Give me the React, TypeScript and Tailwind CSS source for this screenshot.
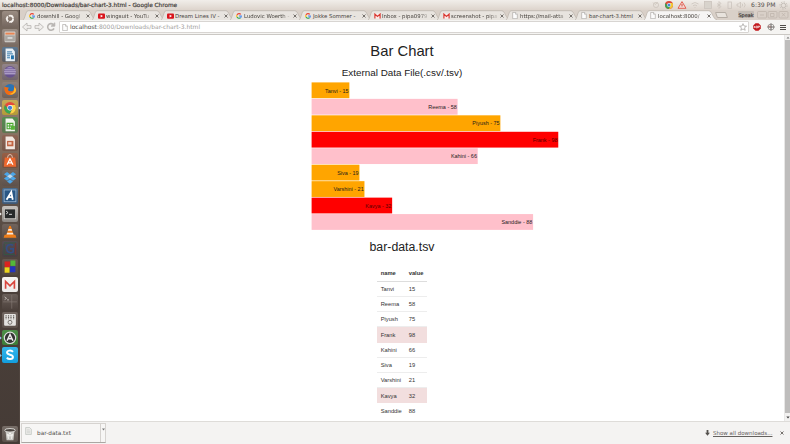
import React from "react";

type Row = { name: string; value: number };

const rows: Row[] = [
  { name: "Tanvi", value: 15 },
  { name: "Reema", value: 58 },
  { name: "Piyush", value: 75 },
  { name: "Frank", value: 98 },
  { name: "Kahini", value: 66 },
  { name: "Siva", value: 19 },
  { name: "Varshini", value: 21 },
  { name: "Kavya", value: 32 },
  { name: "Sanddie", value: 88 },
];

const barColors = ["#ffa500", "#ffc0cb", "#ffa500", "#ff0000", "#ffc0cb", "#ffa500", "#ffa500", "#ff0000", "#ffc0cb"];

const GoogleIcon = () => (
  <svg viewBox="0 0 12 12" className="h-[6px] w-[6px] shrink-0" fill="none" strokeWidth="2.2">
    <path d="M9.6 2.8A4.6 4.6 0 0 0 2 3.8" stroke="#ea4335" />
    <path d="M2 3.8A4.6 4.6 0 0 0 2 8.2" stroke="#fbbc05" />
    <path d="M2 8.2A4.6 4.6 0 0 0 9 9.5" stroke="#34a853" />
    <path d="M9 9.5A4.6 4.6 0 0 0 10.6 6H6" stroke="#4285f4" />
  </svg>
);

const YoutubeIcon = () => (
  <svg viewBox="0 0 14 12" className="h-[6px] w-[7px] shrink-0">
    <rect x="0" y="1" width="14" height="10.5" rx="2" fill="#d9141c" />
    <path d="M5.3 3.5v5.4L10 6.2z" fill="#fff" />
  </svg>
);

const GmailIcon = () => (
  <svg viewBox="0 0 14 12" className="h-[6px] w-[7px] shrink-0">
    <rect x="1" y="1" width="12" height="10" fill="#fbeeee" />
    <path d="M1.8 11V2.2L7 7l5.2-4.8V11" fill="none" stroke="#d93a32" strokeWidth="2.4" />
  </svg>
);

const PageIcon = () => (
  <svg viewBox="0 0 10 12" className="h-[7px] w-[6px] shrink-0" fill="#fcfcfc" stroke="#a8a5a1" strokeWidth="1.1">
    <path d="M1 .8h5L9 3.8v7.6H1z" />
    <path d="M6 .8v3h3" />
  </svg>
);

const CloseIcon = () => (
  <svg viewBox="0 0 8 8" className="h-[4px] w-[4px] shrink-0" stroke="#68635f" strokeWidth="1.8">
    <path d="M1 1l6 6M7 1L1 7" />
  </svg>
);

type TabInfo = { icon: React.ReactNode; label: string; faded: boolean };

const tabs: TabInfo[] = [
  { icon: <GoogleIcon />, label: "downhill - Googl", faded: true },
  { icon: <YoutubeIcon />, label: "wingsuit - YouTu", faded: true },
  { icon: <YoutubeIcon />, label: "Dream Lines IV -", faded: false },
  { icon: <GoogleIcon />, label: "Ludovic Woerth -", faded: true },
  { icon: <GoogleIcon />, label: "Jokke Sommer -", faded: false },
  { icon: <GmailIcon />, label: "Inbox - pipa0979", faded: true },
  { icon: <GmailIcon />, label: "screenshot - pipa", faded: true },
  { icon: <PageIcon />, label: "https://mail-atta", faded: true },
  { icon: <PageIcon />, label: "bar-chart-3.html", faded: false },
  { icon: <PageIcon />, label: "localhost:8000/", faded: true },
];

function Tab({ tab, active }: { tab: TabInfo; active: boolean }) {
  return (
    <div className="relative h-[10px] w-[69px] shrink-0">
      <svg viewBox="0 0 73 10" className="absolute top-0 left-0 h-[10px] w-[73px]">
        <path d="M0 10C2 9 2.6 1 5 .7H65C68 1 69 9 73 10" fill={active ? "#f6f5f4" : "#e8e4df"} stroke="#b9b1a9" strokeWidth=".7" />
      </svg>
      <div className="relative flex h-full items-center pt-[1px] pl-[6px]">
        <span className="flex w-[7px] shrink-0">{tab.icon}</span>
        <span
          className={
            tab.faded
              ? "ml-[1px] w-[48px] shrink-0 whitespace-nowrap text-[5.4px] leading-[8px] text-[#45413c] [mask-image:linear-gradient(to_right,#000_78%,transparent)]"
              : "ml-[1px] w-[48px] shrink-0 whitespace-nowrap text-[5.4px] leading-[8px] text-[#45413c]"
          }
        >
          {tab.label}
        </span>
        <span className="ml-[1px] flex">
          <CloseIcon />
        </span>
      </div>
    </div>
  );
}

type Launcher = { from: string; to: string; art: React.ReactNode };

const launchers: Launcher[] = [
  { from: "#9a8c82", to: "#75675f", art: <g fill="none" stroke="#f5f1ed"><circle cx="8" cy="8" r="3.2" strokeWidth="1.8" strokeDasharray="5.7 1" /><circle cx="4.5" cy="8" r=".5" /><circle cx="9.7" cy="5" r=".5" /><circle cx="9.7" cy="11" r=".5" /></g> },
  { from: "#9b8e85", to: "#7a6d65", art: <g><rect x="2.5" y="2.6" width="11" height="11" rx="1" fill="#d5d2cd" /><path d="M3.3 3.7h9.4v2H3.3z" fill="#e98553" /><path d="M3 6.5h10v6H3z" fill="#aaa6a1" /><path d="M5.5 8.5h5v1.3h-5z" fill="#eee" /></g> },
  { from: "#5b7892", to: "#5b5b60", art: <g><path d="M3.5 1.5h7l2.5 3v10H3.5z" fill="#e8f0f6" /><path d="M5 5h5M5 7h6M5 9h3M5 11h3" stroke="#3176a8" /><path d="M9 8.5h3v4H9z" fill="#2273ad" /></g> },
  { from: "#93858a", to: "#70636c", art: <g><circle cx="8" cy="8" r="6" fill="#67528f" /><path d="M2.4 6h11.2M2 8h12M2.4 10h11.2" stroke="#d7cbe7" strokeWidth=".9" /><path d="M4 4.5Q8 1 12 4.5" fill="#a08dbf" /></g> },
  { from: "#8f8179", to: "#6e6159", art: <g><circle cx="8" cy="8" r="6" fill="#2b73b3" /><path d="M2.2 5C1 14 10 16 13.5 10.5 15 8 14 5 12 3.500c.7 3 .2 6-3 6-3 0-4-2-2-3.700C5.500 5.600 4 5 2.200 5z" fill="#ef6b13" /><path d="M12 5c1 4-1 7-5 7 4 2 8-1 7-5z" fill="#ffba27" /></g> },
  { from: "#c9ab57", to: "#b19b38", art: <g><circle cx="8" cy="8" r="6" fill="#e64a3b" /><path d="M2.8 5A6 6 0 0 0 8 14l2.5-5L5.2 8z" fill="#37a853" /><path d="M8 14a6 6 0 0 0 5.2-9H8l2.5 4z" fill="#f8d648" /><circle cx="8" cy="8" r="2.8" fill="#f7f7f7" /><circle cx="8" cy="8" r="2.2" fill="#4383d3" /></g> },
  { from: "#548e50", to: "#5d7550", art: <g><path d="M3.5 1.5h7l2.5 3v10H3.5z" fill="#f1f6ed" /><path d="M5 6.5h6v5.5H5zM5 9.2h6M7.8 6.5V12" fill="none" stroke="#47a52f" strokeWidth="1.1" /><path d="M9 9h4v4H9z" fill="#56b437" /></g> },
  { from: "#8d6454", to: "#77584a", art: <g><path d="M3.5 1.5h7l2.5 3v10H3.5z" fill="#f2e8e1" /><rect x="5" y="6" width="6.5" height="5.5" fill="#c26442" /><path d="M6.2 7.3h3.4v2.5H6.2z" fill="#efd0c1" /></g> },
  { from: "#985f45", to: "#74503f", art: <g><path d="M2.7 4.5h10.6l1 9.5H1.7z" fill="#ed682e" /><path d="M5.5 5Q5.5 1.5 8 1.5T10.5 5" fill="none" stroke="#e2c0ae" /><path d="M5 12l3-6 3 6M6 10h4" fill="none" stroke="#fff" strokeWidth="1.2" /></g> },
  { from: "#756861", to: "#5d514b", art: <g fill="#4ba6e9"><path d="M5 2L8 4.3 5 6.5 1.8 4.3zM11 2l3.2 2.3L11 6.5 8 4.3zM5 6.5l3 2.2L5 11 1.8 8.7zM11 6.5l3.2 2.2L11 11 8 8.7zM8 9.5l3 2.3L8 14l-3-2.2z" /><path d="M5 6.5l3-2.2 3 2.2-3 2.2z" fill="#b8ddf8" /></g> },
  { from: "#4a6e92", to: "#3e5876", art: <g><rect x="2" y="2" width="12" height="12" fill="#295785" stroke="#9ab8d5" strokeWidth=".8" /><path d="M4.5 12l4.8-8 1.5 8M6 9.4h5" fill="none" stroke="#fff" strokeWidth="1.8" /></g> },
  { from: "#c5c1bc", to: "#8c8884", art: <g><rect x="2.2" y="3" width="11.6" height="10" fill="#282a2a" stroke="#d7d4cf" strokeWidth=".8" /><path d="M4 5.2l2 1.5-2 1.5M7 8.5h3" fill="none" stroke="#eee" strokeWidth=".9" /></g> },
  { from: "#70635c", to: "#584c46", art: <g><path d="M2.5 11h11l1 3h-13z" fill="#ed7e1b" /><path d="M7.2 2h1.6L12 12H4z" fill="#f17d16" /><path d="M6.4 5h3.2l.6 2H5.8zM5 9h6l.5 1.7h-7z" fill="#f5e8dc" /></g> },
  { from: "#554c55", to: "#494043", art: <g fill="none"><path d="M2 2h12" stroke="#355d47" /><path d="M13.7 2v12" stroke="#743633" strokeWidth="1.3" /><path d="M2 3v10.8h11" stroke="#365645" /><path d="M11.2 4.5C8 2.2 4.2 4.5 4.5 8s4 5 6.8 3V8H8" stroke="#354f83" strokeWidth="1.6" /></g> },
  { from: "#665952", to: "#524741", art: <g><rect x="2.5" y="2.5" width="5.5" height="6" fill="#db2420" /><rect x="8.5" y="1.5" width="5" height="5.5" fill="#53b83a" /><rect x="2.5" y="8.5" width="5" height="5.5" fill="#ecd51d" /><rect x="8" y="7.5" width="5.5" height="6" fill="#2434bd" /></g> },
  { from: "#f5f3f1", to: "#eeeceb", art: <path d="M3.5 12V4.5L8 9l4.5-4.5V12" fill="none" stroke="#d9453d" strokeWidth="1.7" /> },
  { from: "#6a5f59", to: "#4c413c", art: <g><path d="M9.8 1v14M1 8h14" stroke="#877d77" strokeWidth=".6" /><path d="M2.5 3l2 1.4-2 1.4M5 6h2" stroke="#d3ccc8" fill="none" strokeWidth=".8" /></g> },
  { from: "#70655f", to: "#5b504a", art: <g><rect x="2" y="2" width="12" height="12" rx="1" fill="#e4e3e0" /><path d="M4 3.4v4M6.5 3.4v4M9 3.4v4M11.7 3.4v4" stroke="#625d59" strokeWidth="1.2" strokeDasharray="1.2 .6" /><circle cx="8" cy="10.5" r="2" fill="none" stroke="#77736f" /></g> },
  { from: "#4c8e47", to: "#3c7d38", art: <g><circle cx="8" cy="8" r="5.8" fill="#333" stroke="#dedede" strokeWidth="1.2" /><path d="M5 11l3-6.5 3 6.5M6.2 9h3.7" fill="none" stroke="#eee" strokeWidth="1.5" /></g> },
  { from: "#35b7ec", to: "#129ede", art: <path d="M11 5C9.5 3 5 3.3 5 5.7 5 8.7 11 7 11 10.2 11 12.8 6.3 13 4.8 10.8" fill="none" stroke="#fff" strokeWidth="2" /> },
];

function LauncherTile({ item }: { item: Launcher }) {
  return (
    <div
      className="h-[15.7px] w-[16px] shrink-0 rounded-[2px]"
      style={{ background: `linear-gradient(${item.from}, ${item.to})` }}
    >
      <svg viewBox="0 0 16 16" className="h-full w-full">{item.art}</svg>
    </div>
  );
}

const trash: Launcher = {
  from: "#766d67",
  to: "#5c524c",
  art: <g><path d="M3.5 5h9l-1 9.5h-7z" fill="#c9c8c3" /><ellipse cx="8" cy="4.4" rx="5.5" ry="1.8" fill="#49433e" stroke="#dad8d4" /><path d="M8 7l2 3H6zM5.5 8l1 5M10.5 8l-1 5" stroke="#f7f6f3" fill="none" /></g>,
};

function SideDock() {
  return (
    <aside className="relative flex w-[20px] shrink-0 flex-col items-start justify-between border-r border-[#4f443e] bg-[linear-gradient(#6f6259_0,#8b7b6f_20%,#86705f_31%,#63564d_40%,#4b403a_62%,#453b36)] pt-[1.3px] pb-[2px] pl-[2px]">
      <div className="flex flex-col gap-[2px]">
        {launchers.map((l, i) => <LauncherTile key={i} item={l} />)}
      </div>
      <LauncherTile item={trash} />
      <svg viewBox="0 0 20 434" className="absolute top-0 left-0 h-[434px] w-[20px]">
        <path d="M0 96.500l1.800 1.500L0 99.500zM20 96.500L18.200 98l1.800 1.500zM0 202.500l1.800 1.500L0 205.500z" fill="#eee" />
        <path d="M0 326.500l1.800 1.500L0 329.500zM0 344l1.800 1.500L0 347z" fill="#8fc7e8" />
      </svg>
    </aside>
  );
}

function SystemBar() {
  return (
    <header className="flex h-[10px] shrink-0 items-center justify-between bg-[linear-gradient(#f1eeea,#ddd4cc)] pl-[2px] text-[#45413c]">
      <span className="whitespace-nowrap text-[5.75px] leading-[10px] [-webkit-text-stroke:0.2px_#45413c]">localhost:8000/Downloads/bar-chart-3.html - Google Chrome</span>
      <div className="flex h-full items-center">
        <svg viewBox="0 0 100 10" className="h-[10px] w-[100px]" fill="none" stroke="#cbc4bd" strokeWidth=".8">
          <circle cx="6" cy="5" r="2.6" /><path d="M3 2.500l2 2 3-2" />
          <g stroke="none"><circle cx="19" cy="5" r="4" fill="#dd4a39" /><path d="M15.5 3A4 4 0 0 0 19 9l1.500-3.300L17 5z" fill="#3ba553" /><path d="M19 9a4 4 0 0 0 3.500-6H19l1.500 3z" fill="#f2ca35" /><circle cx="19" cy="5" r="1.900" fill="#fff" /><circle cx="19" cy="5" r="1.500" fill="#4684d9" /></g>
          <path d="M32 1.600L36 8.300h-8z" fill="#f4dcd7" stroke="#e36256" strokeWidth="1" /><path d="M32 4v2.500" stroke="#d3483d" strokeWidth="1" />
          <path d="M41.500 4Q45 1 48.500 4M43 5.800Q45 4 47 5.800M44.500 7.500h1" />
          <rect x="54.500" y="1.500" width="7" height="7" fill="#d8d3cc" /><path d="M67 3.500l4 3-2 2v-7l2 2-4 3" /><rect x="78" y="2" width="3.500" height="6.500" />
          <path d="M87 4h1.500l2-2v6l-2-2H87zM92 3.500q1.500 1.500 0 3M94 2.500q2.500 2.500 0 5" />
        </svg>
        <span className="ml-[1px] w-[24px] whitespace-nowrap text-[6.100px] leading-[10px] text-[#55504b]">6:39 PM</span>
        <svg viewBox="0 0 10 10" className="mr-[2px] ml-[4px] h-[9px] w-[9px]" fill="none" stroke="#c1bab3"><circle cx="5" cy="5" r="2.500" /><circle cx="5" cy="5" r="4" strokeDasharray="1.500 1.600" /></svg>
      </div>
    </header>
  );
}

function TabStrip() {
  return (
    <div className="flex h-[10px] shrink-0 bg-[#d9d0c8] pl-[3px]">
      {tabs.map((t, i) => <Tab key={i} tab={t} active={i === tabs.length - 1} />)}
      <div className="mt-[2px] ml-[3px] h-[6px] w-[11px] skew-x-[20deg] rounded-[1px] border-[0.5px] border-[#b5ada5] bg-[#e8e3dd]" />
      <div className="mt-[1px] ml-[11px] flex h-[7px] w-[16px] items-center justify-center rounded-[1px] bg-[#c3bbb4] text-[4.900px] leading-[6px] text-[#45403c] [-webkit-text-stroke:0.2px_#45403c]">Speak</div>
      <svg viewBox="0 0 34 10" className="ml-[2px] h-[10px] w-[34px]" fill="none" stroke="#bcb2a9" strokeWidth=".7">
        <rect x="1.500" y="1.500" width="9" height="6.500" rx="1" /><path d="M4 5h4" />
        <rect x="12" y="1.500" width="9" height="6.500" rx="1" /><path d="M14.500 3.500h3.500v3h-3.500z" />
        <rect x="23" y="1.500" width="9" height="6.500" rx="1" /><path d="M25.800 3l3.500 3.500M29.300 3l-3.500 3.500" />
      </svg>
    </div>
  );
}

function Toolbar() {
  return (
    <div className="flex h-[15px] shrink-0 items-center border-b border-[#cbc8c4] bg-[#f5f4f2]">
      <svg viewBox="0 0 39 14" className="h-[14px] w-[39px] shrink-0" fill="#f0eeec" stroke="#b5b2af" strokeWidth=".8">
        <path d="M2.500 7l4.500-4v2.600h4v2.800H7V11z" />
        <path d="M23.500 7L19 3v2.600h-4v2.800h4V11z" />
        <path d="M34 8.300A3.300 3.300 0 1 1 33.200 4.500" fill="none" stroke="#b9b6b3" strokeWidth="1.600" />
        <path d="M34.800 2.800v3.400h-3.600z" fill="#b9b6b3" />
      </svg>
      <div className="flex h-[12px] w-[690px] shrink-0 items-center rounded-[1px] border-[0.5px] border-[#d8d5d2] bg-white pl-[2px]">
        <PageIcon />
        <span className="ml-[2px] text-[6px] leading-[10px] text-[#a19e9c]"><span className="text-[#494745]">localhost</span>:8000/Downloads/bar-chart-3.html</span>
        <svg viewBox="0 0 12 12" className="mr-[1px] ml-auto h-[8px] w-[8px]" fill="none" stroke="#9b9895"><path d="M6 1l1.500 3.500 3.800.3-3 2.400 1 3.700L6 9l-3.300 1.900 1-3.700-3-2.400 3.800-.3z" /></svg>
      </div>
      <div className="flex flex-1 items-center justify-between pr-[4px] pl-[4px]">
        <svg viewBox="0 0 16 16" className="h-[8px] w-[8px]"><path d="M5 .5h6L15.500 5v6L11 15.500H5L.5 11V5z" fill="#c3191d" /><path d="M2.500 10l1-4 1 4M6.500 6v4h2.300V6zM10.500 10V6H13v2h-2.500" fill="none" stroke="#fff" strokeWidth="1.200" /></svg>
        <svg viewBox="0 0 16 16" className="h-[8px] w-[8px]" fill="none"><circle cx="8" cy="8" r="6" stroke="#a5a29f" strokeWidth="2" /><path d="M8 1v14M1 8h14" stroke="#686563" strokeWidth="2" /><path d="M1 6h5v4" stroke="#bd706c" /></svg>
        <svg viewBox="0 0 12 14" className="h-[7px] w-[6px]" stroke="#4f4c49" strokeWidth="2"><path d="M0 3h12M0 7h12M0 11h12" /></svg>
      </div>
    </div>
  );
}

function BarChart() {
  return (
    <svg viewBox="0 0 250 149" className="ml-[291px] h-[149px] w-[250px] shrink-0 font-['Liberation_Sans',sans-serif]">
      {rows.map((r, i) => {
        const y = 0.4 + i * 16.46;
        const w = r.value * 2.517;
        return (
          <g key={r.name}>
            <rect x={0.6} y={y} width={w} height={15.8} fill={barColors[i]} />
            <text x={w - 0.2} y={y + 10.1} textAnchor="end" fontSize={5.45} fill={barColors[i] === "#ff0000" ? "#570000" : "#24201c"}>
              {`${r.name} - ${r.value}`}
            </text>
          </g>
        );
      })}
    </svg>
  );
}

function DataTable() {
  return (
    <div role="table" className="ml-[357.300px] w-[49.500px] text-[5.750px] leading-[8px] text-[#333]">
      <div role="row" className="grid h-[15.800px] grid-cols-[28px_1fr] items-center border-b border-[#ddd] font-bold">
        <span className="pl-[3.400px]">name</span>
        <span className="pl-[3.400px]">value</span>
      </div>
      {rows.map((r) => (
        <div
          role="row"
          key={r.name}
          className={
            r.name === "Frank" || r.name === "Kavya"
              ? "grid h-[15.200px] grid-cols-[28px_1fr] items-center bg-[#f2dede]"
              : "grid h-[15.200px] grid-cols-[28px_1fr] items-center border-b border-[#ededed] last:border-b-0"
          }
        >
          <span className="pl-[3.400px]">{r.name}</span>
          <span className="pl-[3.400px]">{r.value}</span>
        </div>
      ))}
    </div>
  );
}

function Page() {
  return (
    <div className="flex h-[386px] shrink-0 overflow-hidden bg-white">
      <main className="flex w-[764px] shrink-0 flex-col font-['Liberation_Sans',sans-serif] text-[#222]">
        <h1 className="mt-[8px] h-[17px] text-center text-[14.800px] leading-[17px]">Bar Chart</h1>
        <h3 className="mt-[7px] h-[12px] text-center text-[9.870px] leading-[12px]">External Data File(.csv/.tsv)</h3>
        <div className="mt-[3px] flex"><BarChart /></div>
        <h2 className="mt-[9px] h-[15px] text-center text-[12.300px] leading-[15px]">bar-data.tsv</h2>
        <div className="mt-[11px] flex"><DataTable /></div>
      </main>
      <div className="ml-auto flex w-[6px] flex-col items-center justify-between border-l border-[#e8e7e6] bg-[#f2f1f0]">
        <svg viewBox="0 0 6 5" className="h-[5px] w-[6px]"><path d="M1.500 3.500L3 1.800l1.500 1.700z" fill="#777" /></svg>
        <div className="w-[5px] flex-1 bg-[#bebdbc]" />
        <svg viewBox="0 0 6 8" className="h-[8px] w-[6px]"><path d="M1.300 3.500h3.400L3 5.500z" fill="#444" /></svg>
      </div>
    </div>
  );
}

function DownloadShelf() {
  return (
    <footer className="flex flex-1 items-center border-t border-[#dedcd9] bg-[#f4f3f2] text-[#54514e]">
      <div className="ml-[1px] flex h-[20px] w-[85px] items-center border-[0.5px] border-b-[1px] border-[#d6d3d0] border-b-[#aaa7a3] bg-[#f7f6f5]">
        <svg viewBox="0 0 12 14" className="mb-[4px] ml-[3px] h-[8px] w-[7px]" fill="#efeeec" stroke="#aeb5b0"><path d="M1 1h7l3 3v9H1z" /><path d="M3 5h5M3 7.500h6M3 10h6" strokeWidth=".7" /></svg>
        <span className="ml-[5px] text-[5.750px] leading-[8px]">bar-data.txt</span>
        <div className="ml-auto h-full w-[5px] border-l-[0.5px] border-[#d5d2cf]">
          <svg viewBox="0 0 5 5" className="mt-[3px] h-[5px] w-[5px]"><path d="M1 1.500h3L2.500 3.500z" fill="#777" /></svg>
        </div>
      </div>
      <div className="mr-[6px] ml-auto flex items-center">
        <svg viewBox="0 0 8 10" className="mr-[3px] h-[6px] w-[5px]" fill="#54514e"><path d="M2.500 0h3v4.500H8L4 9.500 0 4.500h2.500z" /></svg>
        <span className="w-[60px] whitespace-nowrap text-[5.500px] leading-[8px] text-[#64615e] underline">Show all downloads...</span>
        <span className="ml-[7px] flex"><CloseIcon /></span>
      </div>
    </footer>
  );
}

export default function App() {
  return (
    <div className="flex h-[444px] w-[790px] flex-col overflow-hidden bg-white font-['DejaVu_Sans','Noto_Sans',sans-serif]">
      <SystemBar />
      <div className="flex min-h-0 flex-1">
        <SideDock />
        <div className="flex w-[770px] flex-col">
          <TabStrip />
          <Toolbar />
          <Page />
          <DownloadShelf />
        </div>
      </div>
    </div>
  );
}
